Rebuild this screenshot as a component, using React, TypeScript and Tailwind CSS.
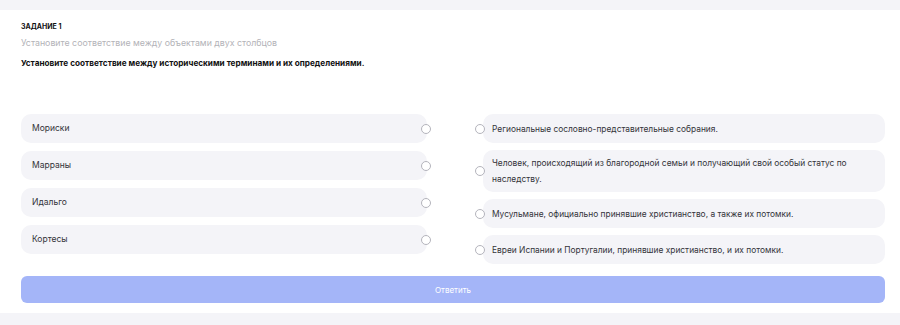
const left = ['Мориски', 'Марраны', 'Идальго', 'Кортесы']

const right = [
  'Региональные сословно-представительные собрания.',
  'Человек, происходящий из благородной семьи и получающий свой особый статус по наследству.',
  'Мусульмане, официально принявшие христианство, а также их потомки.',
  'Евреи Испании и Португалии, принявшие христианство, и их потомки.',
]

function Radio() {
  return (
    <span className="relative z-10 block h-[10px] w-[10px] shrink-0 rounded-full border border-[#b4b4bc] bg-white" />
  )
}

export default function App() {
  return (
    <div
      className="min-h-[325px] w-[900px] bg-[#f4f4f8] pt-[10px] pb-[12px]"
      style={{ fontFamily: 'Inter, "Noto Sans", sans-serif' }}
    >
      <div className="bg-white pl-[21px] pr-[15px] pt-[11px] pb-[10px]">
        <div className="text-[7px] font-bold leading-[12px] text-[#111]">ЗАДАНИЕ 1</div>
        <div className="mt-[3px] text-[8.8px] leading-[14px] text-[#b3b3b8]">
          Установите соответствие между объектами двух столбцов
        </div>
        <div className="mt-[6px] text-[8.2px] font-bold leading-[14px] text-[#111]">
          Установите соответствие между историческими терминами и их определениями.
        </div>

        <div className="mt-[44px] grid grid-cols-2 items-start gap-x-[44px]">
          <div className="flex flex-col gap-[8px]">
            {left.map((t) => (
              <div key={t} className="flex items-center">
                <div className="flex h-[29px] flex-1 items-center rounded-[10px] bg-[#f4f4f8] px-[11px] text-[8.5px] text-[#333338]">
                  {t}
                </div>
                <div className="-ml-[6px]">
                  <Radio />
                </div>
              </div>
            ))}
          </div>
          <div className="flex flex-col gap-[7px]">
            {right.map((t) => (
              <div key={t} className="flex items-center">
                <Radio />
                <div className="-ml-[2px] flex min-h-[29px] flex-1 items-center rounded-[10px] bg-[#f4f4f8] py-[5px] pl-[9px] pr-[24px] text-[8.4px] leading-[16px] text-[#333338]">
                  {t}
                </div>
              </div>
            ))}
          </div>
        </div>

        <button className="mt-[12px] flex h-[27px] w-full items-center justify-center rounded-[6px] bg-[#a4b5f8] text-[8px] text-white">
          Ответить
        </button>
      </div>
    </div>
  )
}
